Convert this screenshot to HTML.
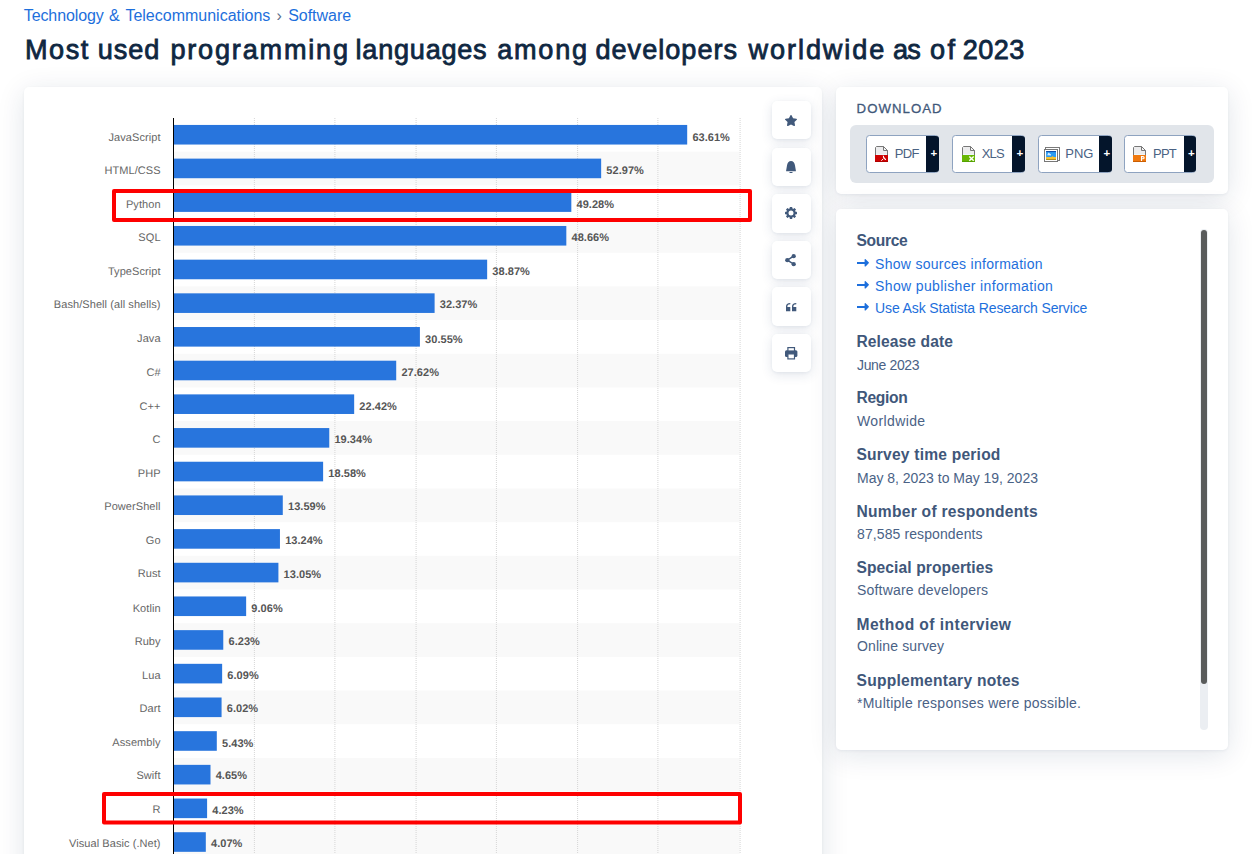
<!DOCTYPE html>
<html lang="en">
<head>
<meta charset="utf-8">
<title>Most used programming languages among developers worldwide as of 2023</title>
<style>
html,body{margin:0;padding:0;background:#fff;}
body{width:1252px;height:854px;overflow:hidden;position:relative;font-family:"Liberation Sans",sans-serif;color:#0f2741;}
.abs{position:absolute;white-space:nowrap;}
.crumb{left:0;top:6.4px;width:600px;height:20px;font-size:16px;line-height:20px;color:#1d6fdc;}
.crumb .sep{color:#5a6e8a;}
h1{position:absolute;left:0;top:30px;width:1100px;height:40px;margin:0;font-size:27.1px;line-height:40px;font-weight:normal;color:#0f2741;white-space:nowrap;-webkit-text-stroke:.8px #0f2741;}
.card{position:absolute;background:#fff;border-radius:5px;box-shadow:0 1px 3px rgba(20,45,85,.06),0 5px 28px rgba(20,45,85,.12);}
#chartcard{left:24px;top:87px;width:798px;height:800px;}
#chart{position:absolute;left:0;top:0;width:830px;height:854px;font-family:"Liberation Sans",sans-serif;font-size:11px;text-rendering:geometricPrecision;}
.ibtn{position:absolute;left:772px;width:39px;height:38.6px;background:#fff;border-radius:5px;box-shadow:0 1px 3px rgba(30,60,110,.06),0 3px 12px rgba(30,60,110,.12);}
.ic{position:absolute;fill:#41597b;overflow:visible;}
#dl{left:836px;top:87px;width:392px;height:106.5px;}
#dlt{left:856.6px;top:98.6px;font-size:13.2px;line-height:20px;letter-spacing:1.05px;color:#3f587a;-webkit-text-stroke:.3px #3f587a;}
#dlp{position:absolute;left:850px;top:125px;width:364px;height:58px;background:#e1e5ea;border-radius:6px;}
.dbtn{position:absolute;top:135.1px;height:35.5px;background:#fff;border:1px solid #8ea3c0;border-radius:3.5px;}
.dbtn .pl{position:absolute;right:-1px;top:-.3px;bottom:-.3px;border-radius:0 3px 3px 0;padding-left:2.6px;box-sizing:border-box;width:12.5px;background:#04152b;color:#fff;font-weight:bold;font-size:11.5px;line-height:35.5px;text-align:center;}
.dbtn .t{position:absolute;left:29px;top:7.6px;font-size:13px;line-height:20px;color:#4a6283;}
.fic{position:absolute;}
#src{left:836px;top:209px;width:392px;height:541px;}
.sh{font-weight:bold;font-size:15.6px;line-height:20px;color:#40577a;left:856.5px;}
.sv{font-size:14px;line-height:20px;color:#4a6286;left:857px;margin-top:.6px;}
.sl{font-size:14px;line-height:20px;color:#1d6fdc;left:875.1px;margin-top:.6px;}
.arr{position:absolute;left:857px;width:12px;height:8px;fill:#1d6fdc;}
#track{position:absolute;left:1200.3px;top:229px;width:7.4px;height:501px;border-radius:4px;background:#ebeef2;}
#thumb{position:absolute;left:1201px;top:229.6px;width:6px;height:454.6px;border-radius:3px;background:#595b5b;}
</style>
</head>
<body>
<div class="abs crumb"><span class="abs cw" style="left:23.80px;top:0px;letter-spacing:-0.113px">Technology</span> <span class="abs cw" style="left:109.10px;top:0px;letter-spacing:0.000px">&amp;</span> <span class="abs cw" style="left:125.40px;top:0px;letter-spacing:0.001px">Telecommunications</span> <span class="abs cw sep" style="left:276.60px;top:0px;letter-spacing:0.000px">›</span> <span class="abs cw" style="left:288.20px;top:0px;letter-spacing:-0.027px">Software</span></div>
<h1><span class="abs hw" style="left:25.00px;top:0px;letter-spacing:1.536px">Most</span> <span class="abs hw" style="left:97.70px;top:0px;letter-spacing:0.939px">used</span> <span class="abs hw" style="left:170.40px;top:0px;letter-spacing:1.800px">programming</span> <span class="abs hw" style="left:355.60px;top:0px;letter-spacing:0.750px">languages</span> <span class="abs hw" style="left:497.20px;top:0px;letter-spacing:1.750px">among</span> <span class="abs hw" style="left:595.40px;top:0px;letter-spacing:1.019px">developers</span> <span class="abs hw" style="left:748.50px;top:0px;letter-spacing:1.925px">worldwide</span> <span class="abs hw" style="left:892.90px;top:0px;letter-spacing:-0.600px">as</span> <span class="abs hw" style="left:930.00px;top:0px;letter-spacing:2.400px">of</span> <span class="abs hw" style="left:962.80px;top:0px;letter-spacing:0.404px">2023</span></h1>

<div class="card" id="chartcard"></div>
<svg id="chart" viewBox="0 0 830 854">
<rect x="174" y="151.68" width="565.6" height="33.68" fill="#f9f9f9"/>
<rect x="174" y="219.04" width="565.6" height="33.68" fill="#f9f9f9"/>
<rect x="174" y="286.40" width="565.6" height="33.68" fill="#f9f9f9"/>
<rect x="174" y="353.76" width="565.6" height="33.68" fill="#f9f9f9"/>
<rect x="174" y="421.12" width="565.6" height="33.68" fill="#f9f9f9"/>
<rect x="174" y="488.48" width="565.6" height="33.68" fill="#f9f9f9"/>
<rect x="174" y="555.84" width="565.6" height="33.68" fill="#f9f9f9"/>
<rect x="174" y="623.20" width="565.6" height="33.68" fill="#f9f9f9"/>
<rect x="174" y="690.56" width="565.6" height="33.68" fill="#f9f9f9"/>
<rect x="174" y="757.92" width="565.6" height="33.68" fill="#f9f9f9"/>
<rect x="174" y="825.28" width="565.6" height="33.68" fill="#f9f9f9"/>
<line x1="254.4" y1="118.0" x2="254.4" y2="900" stroke="#d6d6d6" stroke-width="1" stroke-dasharray="1 1"/>
<line x1="334.9" y1="118.0" x2="334.9" y2="900" stroke="#d6d6d6" stroke-width="1" stroke-dasharray="1 1"/>
<line x1="416.1" y1="118.0" x2="416.1" y2="900" stroke="#d6d6d6" stroke-width="1" stroke-dasharray="1 1"/>
<line x1="496.4" y1="118.0" x2="496.4" y2="900" stroke="#d6d6d6" stroke-width="1" stroke-dasharray="1 1"/>
<line x1="577.6" y1="118.0" x2="577.6" y2="900" stroke="#d6d6d6" stroke-width="1" stroke-dasharray="1 1"/>
<line x1="657.9" y1="118.0" x2="657.9" y2="900" stroke="#d6d6d6" stroke-width="1" stroke-dasharray="1 1"/>
<line x1="740.1" y1="118.0" x2="740.1" y2="900" stroke="#d6d6d6" stroke-width="1" stroke-dasharray="1 1"/>
<rect x="174" y="124.94" width="513.19" height="19.6" fill="#2875dd"/>
<rect x="174" y="158.62" width="427.16" height="19.6" fill="#2875dd"/>
<rect x="174" y="192.30" width="397.33" height="19.6" fill="#2875dd"/>
<rect x="174" y="225.98" width="392.32" height="19.6" fill="#2875dd"/>
<rect x="174" y="259.66" width="313.16" height="19.6" fill="#2875dd"/>
<rect x="174" y="293.34" width="260.61" height="19.6" fill="#2875dd"/>
<rect x="174" y="327.02" width="245.90" height="19.6" fill="#2875dd"/>
<rect x="174" y="360.70" width="222.21" height="19.6" fill="#2875dd"/>
<rect x="174" y="394.38" width="180.17" height="19.6" fill="#2875dd"/>
<rect x="174" y="428.06" width="155.26" height="19.6" fill="#2875dd"/>
<rect x="174" y="461.74" width="149.12" height="19.6" fill="#2875dd"/>
<rect x="174" y="495.42" width="108.78" height="19.6" fill="#2875dd"/>
<rect x="174" y="529.10" width="105.95" height="19.6" fill="#2875dd"/>
<rect x="174" y="562.78" width="104.41" height="19.6" fill="#2875dd"/>
<rect x="174" y="596.46" width="72.15" height="19.6" fill="#2875dd"/>
<rect x="174" y="630.14" width="49.27" height="19.6" fill="#2875dd"/>
<rect x="174" y="663.82" width="48.14" height="19.6" fill="#2875dd"/>
<rect x="174" y="697.50" width="47.57" height="19.6" fill="#2875dd"/>
<rect x="174" y="731.18" width="42.80" height="19.6" fill="#2875dd"/>
<rect x="174" y="764.86" width="36.50" height="19.6" fill="#2875dd"/>
<rect x="174" y="798.54" width="33.10" height="19.6" fill="#2875dd"/>
<rect x="174" y="832.22" width="31.81" height="19.6" fill="#2875dd"/>
<rect x="173" y="118.0" width="1" height="800" fill="#000"/>
<text x="160.6" y="140.80" text-anchor="end" letter-spacing=".07" fill="#666">JavaScript</text>
<text x="692.39" y="141.00" font-weight="bold" letter-spacing=".04" fill="#555">63.61%</text>
<text x="160.6" y="173.69" text-anchor="end" letter-spacing=".07" fill="#666">HTML/CSS</text>
<text x="606.36" y="173.89" font-weight="bold" letter-spacing=".04" fill="#555">52.97%</text>
<text x="160.6" y="207.98" text-anchor="end" letter-spacing=".07" fill="#666">Python</text>
<text x="576.53" y="208.18" font-weight="bold" letter-spacing=".04" fill="#555">49.28%</text>
<text x="160.6" y="240.57" text-anchor="end" letter-spacing=".07" fill="#666">SQL</text>
<text x="571.52" y="240.77" font-weight="bold" letter-spacing=".04" fill="#555">48.66%</text>
<text x="160.6" y="275.16" text-anchor="end" letter-spacing=".07" fill="#666">TypeScript</text>
<text x="492.36" y="275.36" font-weight="bold" letter-spacing=".04" fill="#555">38.87%</text>
<text x="160.6" y="307.75" text-anchor="end" letter-spacing=".07" fill="#666">Bash/Shell (all shells)</text>
<text x="439.81" y="307.95" font-weight="bold" letter-spacing=".04" fill="#555">32.37%</text>
<text x="160.6" y="342.34" text-anchor="end" letter-spacing=".07" fill="#666">Java</text>
<text x="425.10" y="342.54" font-weight="bold" letter-spacing=".04" fill="#555">30.55%</text>
<text x="160.6" y="375.93" text-anchor="end" letter-spacing=".07" fill="#666">C#</text>
<text x="401.41" y="376.13" font-weight="bold" letter-spacing=".04" fill="#555">27.62%</text>
<text x="160.6" y="409.52" text-anchor="end" letter-spacing=".07" fill="#666">C++</text>
<text x="359.37" y="409.72" font-weight="bold" letter-spacing=".04" fill="#555">22.42%</text>
<text x="160.6" y="443.11" text-anchor="end" letter-spacing=".07" fill="#666">C</text>
<text x="334.46" y="443.31" font-weight="bold" letter-spacing=".04" fill="#555">19.34%</text>
<text x="160.6" y="476.70" text-anchor="end" letter-spacing=".07" fill="#666">PHP</text>
<text x="328.32" y="476.90" font-weight="bold" letter-spacing=".04" fill="#555">18.58%</text>
<text x="160.6" y="510.29" text-anchor="end" letter-spacing=".07" fill="#666">PowerShell</text>
<text x="287.98" y="510.49" font-weight="bold" letter-spacing=".04" fill="#555">13.59%</text>
<text x="160.6" y="543.88" text-anchor="end" letter-spacing=".07" fill="#666">Go</text>
<text x="285.15" y="544.08" font-weight="bold" letter-spacing=".04" fill="#555">13.24%</text>
<text x="160.6" y="577.47" text-anchor="end" letter-spacing=".07" fill="#666">Rust</text>
<text x="283.61" y="577.67" font-weight="bold" letter-spacing=".04" fill="#555">13.05%</text>
<text x="160.6" y="611.86" text-anchor="end" letter-spacing=".07" fill="#666">Kotlin</text>
<text x="251.35" y="612.06" font-weight="bold" letter-spacing=".04" fill="#555">9.06%</text>
<text x="160.6" y="644.65" text-anchor="end" letter-spacing=".07" fill="#666">Ruby</text>
<text x="228.47" y="644.85" font-weight="bold" letter-spacing=".04" fill="#555">6.23%</text>
<text x="160.6" y="678.84" text-anchor="end" letter-spacing=".07" fill="#666">Lua</text>
<text x="227.34" y="679.04" font-weight="bold" letter-spacing=".04" fill="#555">6.09%</text>
<text x="160.6" y="711.83" text-anchor="end" letter-spacing=".07" fill="#666">Dart</text>
<text x="226.77" y="712.03" font-weight="bold" letter-spacing=".04" fill="#555">6.02%</text>
<text x="160.6" y="746.32" text-anchor="end" letter-spacing=".07" fill="#666">Assembly</text>
<text x="222.00" y="746.52" font-weight="bold" letter-spacing=".04" fill="#555">5.43%</text>
<text x="160.6" y="779.01" text-anchor="end" letter-spacing=".07" fill="#666">Swift</text>
<text x="215.70" y="779.21" font-weight="bold" letter-spacing=".04" fill="#555">4.65%</text>
<text x="160.6" y="813.30" text-anchor="end" letter-spacing=".07" fill="#666">R</text>
<text x="212.30" y="813.50" font-weight="bold" letter-spacing=".04" fill="#555">4.23%</text>
<text x="160.6" y="846.69" text-anchor="end" letter-spacing=".07" fill="#666">Visual Basic (.Net)</text>
<text x="211.01" y="846.89" font-weight="bold" letter-spacing=".04" fill="#555">4.07%</text>
<rect x="114" y="191" width="636" height="29" fill="none" stroke="#fe0000" stroke-width="4" stroke-linejoin="round"/>
<rect x="104" y="794" width="636" height="28.4" fill="none" stroke="#fe0000" stroke-width="4" stroke-linejoin="round"/>
</svg>

<div class="ibtn" style="top:100.9px"></div>
<div class="ibtn" style="top:147.5px"></div>
<div class="ibtn" style="top:194.1px"></div>
<div class="ibtn" style="top:240.7px"></div>
<div class="ibtn" style="top:287.3px"></div>
<div class="ibtn" style="top:333.9px"></div>
<svg class="ic" style="left:785.00px;top:114.90px" width="12.00" height="11.00" viewBox="22 0 532 512" preserveAspectRatio="none"><path d="M259.3 17.8L194 150.2 47.9 171.5c-26.200 3.800-36.700 36.100-17.700 54.600l105.700 103-25 145.500c-4.500 26.300 23.200 46 46.400 33.700L288 439.600l130.700 68.700c23.200 12.200 50.900-7.400 46.400-33.700l-25-145.500 105.700-103c19-18.500 8.500-50.800-17.700-54.600L382 150.200 316.700 17.800c-11.700-23.600-45.600-23.900-57.400 0z"/></svg>
<svg class="ic" style="left:786.20px;top:160.90px" width="10.00" height="12.00" viewBox="0 0 10 12" preserveAspectRatio="none"><path d="M0.500 10.300 Q0 10.300 0.100 9.800 L1 4.600 C1.200 1.700 2.900 0 5 0 C7.100 0 8.800 1.700 9 4.600 L9.900 9.800 Q10 10.300 9.500 10.300 Z"/><path d="M3.300 10.900 H6.700 A1.700 1.200 0 0 1 3.300 10.900 Z"/></svg>
<svg class="ic" style="left:785.00px;top:207.00px" width="12.00" height="12.00" viewBox="0 0 12 12" preserveAspectRatio="none"><g transform="translate(6 6)"><rect x="-1.250" y="-6" width="2.500" height="3" rx=".5" transform="rotate(0)"/><rect x="-1.250" y="-6" width="2.500" height="3" rx=".5" transform="rotate(45)"/><rect x="-1.250" y="-6" width="2.500" height="3" rx=".5" transform="rotate(90)"/><rect x="-1.250" y="-6" width="2.500" height="3" rx=".5" transform="rotate(135)"/><rect x="-1.250" y="-6" width="2.500" height="3" rx=".5" transform="rotate(180)"/><rect x="-1.250" y="-6" width="2.500" height="3" rx=".5" transform="rotate(225)"/><rect x="-1.250" y="-6" width="2.500" height="3" rx=".5" transform="rotate(270)"/><rect x="-1.250" y="-6" width="2.500" height="3" rx=".5" transform="rotate(315)"/><path fill-rule="evenodd" d="M-4.700 0 a4.700 4.700 0 1 0 9.400 0 a4.700 4.700 0 1 0 -9.400 0 Z M-2.500 0 a2.500 2.500 0 1 1 5 0 a2.500 2.500 0 1 1 -5 0 Z"/></g></svg>
<svg class="ic" style="left:785.20px;top:253.90px" width="11.00" height="12.40" viewBox="0 0 11 12.400" preserveAspectRatio="none"><path d="M2.300 6.200 L8.700 2.200 M2.300 6.200 L8.700 10.200" stroke="#41597b" stroke-width="1.400" fill="none"/><circle cx="2.300" cy="6.200" r="2.150"/><circle cx="8.700" cy="2.200" r="2.150"/><circle cx="8.700" cy="10.200" r="2.150"/></svg>
<svg class="ic" style="left:785.90px;top:302.90px" width="10.30" height="8.20" viewBox="0 0 10.300 8.200" preserveAspectRatio="none"><path d="M0 8.200 V3.600 C0 1.300 1.300 0 4.300 0 V1.300 C2.300 1.300 1.300 2 1.300 3.900 H4.300 V8.200 Z"/><g transform="translate(6 0)"><path d="M0 8.200 V3.600 C0 1.300 1.300 0 4.300 0 V1.300 C2.300 1.300 1.300 2 1.300 3.900 H4.300 V8.200 Z"/></g></svg>
<svg class="ic" style="left:785.00px;top:346.90px" width="12.40" height="12.50" viewBox="0 0 12.400 12.500" preserveAspectRatio="none"><rect x="0" y="3.300" width="12.400" height="6.700" rx="1.500"/><rect x="2.900" y=".6" width="6.600" height="3.400" fill="#fff" stroke="#41597b" stroke-width="1.200"/><rect x="2.900" y="6.900" width="6.600" height="5" fill="#fff" stroke="#41597b" stroke-width="1.200"/></svg>

<div class="card" id="dl"></div>
<div class="abs" id="dlt">DOWNLOAD</div>
<div id="dlp"></div>
<div class="dbtn" style="left:866.2px;width:70.8px"><span class="t" style="left:27.6px;letter-spacing:-0.650px">PDF</span><span class="pl" style="width:12.8px">+</span></div>
<svg class="fic" width="13" height="16" viewBox="0 0 13 16" style="left:875.0px;top:145.9px"><path d="M0.500 1.500 L1.500 0.500 H8.500 L12.500 4.500 V10 H0.500z" fill="#ececed" stroke="#777" stroke-width="1"/><path d="M8.500 0.500 V4.500 H12.500z" fill="#f6f6f6" stroke="#777" stroke-width="1"/><rect x="1" y="8.300" width="11" height=".8" fill="#eefcff"/><rect x="0" y="9" width="13" height="7" fill="#cd0202"/><rect x="0" y="15.300" width="13" height=".7" fill="#a30000"/><path d="M8.400 10.200 L9.100 12.400 L11 13.600 L9.100 12.600 L8.400 10.200z M6.600 14.400 L7.900 13.200" stroke="#fff" stroke-width="1" stroke-linecap="round" fill="#fff"/></svg>
<div class="dbtn" style="left:952.3px;width:70.7px"><span class="t" style="left:28.4px;letter-spacing:-0.850px">XLS</span><span class="pl" style="width:13.0px">+</span></div>
<svg class="fic" width="13" height="16" viewBox="0 0 13 16" style="left:962.0px;top:145.9px"><path d="M0.500 1.500 L1.500 0.500 H8.500 L12.500 4.500 V10 H0.500z" fill="#ececed" stroke="#777" stroke-width="1"/><path d="M8.500 0.500 V4.500 H12.500z" fill="#f6f6f6" stroke="#777" stroke-width="1"/><rect x="1" y="8.300" width="11" height=".8" fill="#eefcff"/><rect x="0" y="9" width="13" height="7" fill="#69b704"/><rect x="0" y="15.300" width="13" height=".7" fill="#4c9800"/><path d="M7.300 10.500 L11.700 14.800 M11.700 10.500 L7.300 14.800" stroke="#fff" stroke-width="1.400" fill="none"/></svg>
<div class="dbtn" style="left:1038.4px;width:71.6px"><span class="t" style="left:25.9px;letter-spacing:0.000px">PNG</span><span class="pl" style="width:12.7px">+</span></div>
<svg class="fic" width="16" height="15" viewBox="0 0 16 15" style="left:1044.0px;top:147.0px"><rect x="1.500" y="0.500" width="14" height="13" fill="#fff" stroke="#7a7a7a"/><rect x="0.500" y="2.500" width="13" height="12" fill="#fff" stroke="#777"/><rect x="2.100" y="4.100" width="9.900" height="8.800" fill="#2b9cf2"/><rect x="2.100" y="4.100" width="9.900" height="1" fill="#0a46a6"/><path d="M3.200 8.200 L4.400 5.500 L7 7.400 L7 8.400z" fill="#d7ecff"/><rect x="2.100" y="10" width="9.900" height="2.900" fill="#f6c333"/><rect x="7.800" y="9.200" width="1.400" height="1" fill="#f0b82a"/><rect x="2.100" y="12.300" width="9.900" height=".6" fill="#8d6c00"/></svg>
<div class="dbtn" style="left:1124.3px;width:69.9px"><span class="t" style="left:27.7px;letter-spacing:-0.750px">PPT</span><span class="pl" style="width:12.1px">+</span></div>
<svg class="fic" width="13" height="16" viewBox="0 0 13 16" style="left:1133.0px;top:145.9px"><path d="M0.500 1.500 L1.500 0.500 H8.500 L12.500 4.500 V10 H0.500z" fill="#ececed" stroke="#777" stroke-width="1"/><path d="M8.500 0.500 V4.500 H12.500z" fill="#f6f6f6" stroke="#777" stroke-width="1"/><rect x="1" y="8.300" width="11" height=".8" fill="#eefcff"/><rect x="0" y="9" width="13" height="7" fill="#f0790f"/><rect x="0" y="15.300" width="13" height=".7" fill="#b85400"/><path d="M8.500 15 V10.600 H10 a1.100 1.100 0 0 1 0 2.200 H8.500" stroke="#fff" stroke-width="1.100" fill="none"/></svg>

<div class="card" id="src"></div>
<div class="abs sh" style="top:231.0px;letter-spacing:-0.340px">Source</div>
<svg class="arr" style="top:259.3px" viewBox="0 0 12 8"><path d="M0 3h7.600V0.600c0-.5.600-.8 1-.4l3.100 3.100c.3.300.3.700 0 1L8.600 7.400c-.4.400-1 .1-1-.4V5H0z"/></svg>
<div class="abs sl" style="top:253.4px;letter-spacing:0.278px">Show sources information</div>
<svg class="arr" style="top:281.1px" viewBox="0 0 12 8"><path d="M0 3h7.600V0.600c0-.5.600-.8 1-.4l3.100 3.100c.3.300.3.700 0 1L8.600 7.400c-.4.400-1 .1-1-.4V5H0z"/></svg>
<div class="abs sl" style="top:275.3px;letter-spacing:0.356px">Show publisher information</div>
<svg class="arr" style="top:302.9px" viewBox="0 0 12 8"><path d="M0 3h7.600V0.600c0-.5.600-.8 1-.4l3.100 3.100c.3.300.3.700 0 1L8.600 7.400c-.4.400-1 .1-1-.4V5H0z"/></svg>
<div class="abs sl" style="top:297.2px;letter-spacing:-0.126px">Use Ask Statista Research Service</div>
<div class="abs sh" style="top:331.8px;letter-spacing:0.091px">Release date</div>
<div class="abs sv" style="top:354.4px;letter-spacing:-0.358px">June 2023</div>
<div class="abs sh" style="top:388.4px;letter-spacing:-0.300px">Region</div>
<div class="abs sv" style="top:410.7px;letter-spacing:0.375px">Worldwide</div>
<div class="abs sh" style="top:444.9px;letter-spacing:0.206px">Survey time period</div>
<div class="abs sv" style="top:467.0px;letter-spacing:-0.015px">May 8, 2023 to May 19, 2023</div>
<div class="abs sh" style="top:501.5px;letter-spacing:0.265px">Number of respondents</div>
<div class="abs sv" style="top:523.3px;letter-spacing:0.104px">87,585 respondents</div>
<div class="abs sh" style="top:558.0px;letter-spacing:0.088px">Special properties</div>
<div class="abs sv" style="top:579.6px;letter-spacing:0.188px">Software developers</div>
<div class="abs sh" style="top:614.5px;letter-spacing:0.444px">Method of interview</div>
<div class="abs sv" style="top:635.9px;letter-spacing:0.112px">Online survey</div>
<div class="abs sh" style="top:671.1px;letter-spacing:0.245px">Supplementary notes</div>
<div class="abs sv" style="top:692.2px;letter-spacing:0.255px">*Multiple responses were possible.</div>
<div id="track"></div><div id="thumb"></div>
</body>
</html>
